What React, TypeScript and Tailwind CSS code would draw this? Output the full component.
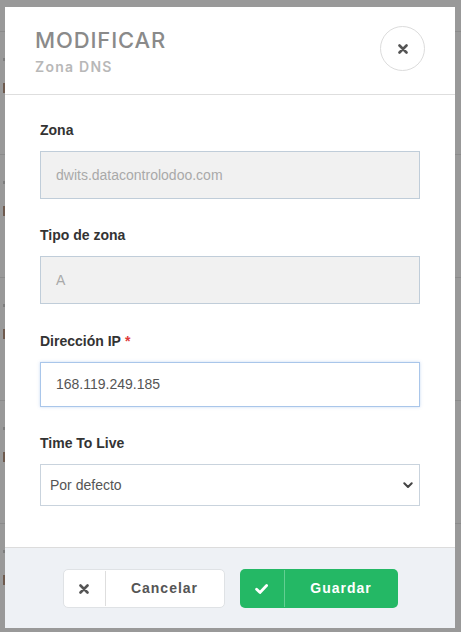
import React from 'react';

const backdropRows = [31, 154, 277, 400, 523];

function TimesIcon({ className = '' }: { className?: string }): React.ReactElement {
  return (
    <svg className={className} width="10" height="10" viewBox="0 0 10 10" fill="none">
      <path d="M1.5 1.5 L8.5 8.5 M8.5 1.5 L1.5 8.5" stroke="currentColor" strokeWidth="2.6" strokeLinecap="round" />
    </svg>
  );
}

function CheckIcon(): React.ReactElement {
  return (
    <svg width="13" height="10" viewBox="0 0 13 10" fill="none">
      <path d="M1.6 5.2 L5 8.4 L11.6 1.6" stroke="currentColor" strokeWidth="2.8" strokeLinecap="round" strokeLinejoin="round" />
    </svg>
  );
}

function Field({
  label,
  required = false,
  children,
  className = '',
}: {
  label: string;
  required?: boolean;
  children: React.ReactNode;
  className?: string;
}): React.ReactElement {
  return (
    <div className={className}>
      <div className="text-[14px] leading-[20px] font-bold text-[#333] mb-[11px]">
        {label}
        {required && <span className="text-[#e03a3a] ml-[4px]">*</span>}
      </div>
      {children}
    </div>
  );
}

export default function App(): React.ReactElement {
  return (
    <div className="relative w-[461px] h-[632px] overflow-hidden bg-[#999999] font-['Liberation_Sans',Arial,sans-serif]">
      {/* Page behind the backdrop */}
      {backdropRows.map((top) => (
        <div key={top} className="absolute left-0 right-0 border-t border-[#8b8b8b]" style={{ top }}>
          <div className="absolute left-[3px] top-[26px] w-[2px] h-[3px] bg-[#7d7d7d]" />
          <div className="absolute left-[3px] top-[51px] w-[2px] h-[10px] bg-[#6e5a4e]" />
        </div>
      ))}

      {/* Modal */}
      <div className="absolute left-[5px] top-[7px] w-[450px] h-[621px] bg-white flex flex-col">
        {/* Header */}
        <div className="h-[88px] border-b border-[#dedede] flex justify-between pl-[30px] pr-[30px]">
          <div className="pt-[19px] font-['Inter',sans-serif]">
            <div className="text-[22px] leading-[28px] font-medium tracking-[0.04em] text-[#8a8a8a]">MODIFICAR</div>
            <div className="mt-[4px] text-[14px] leading-[18px] font-semibold tracking-[0.09em] text-[#b8b8b8]">Zona DNS</div>
          </div>
          <button className="mt-[19px] w-[45px] h-[45px] rounded-full border border-[#dcdcdc] flex items-center justify-center text-[#555]">
            <TimesIcon />
          </button>
        </div>

        {/* Body */}
        <div className="flex-1 px-[35px] pt-[25px]">
          <Field label="Zona">
            <div className="h-[48px] border border-[#c0cdd9] bg-[#f1f1f1] pl-[15px] flex items-center text-[14px] text-[#a9a9a9]">
              dwits.datacontrolodoo.com
            </div>
          </Field>
          <Field label="Tipo de zona" className="mt-[26px]">
            <div className="h-[48px] border border-[#c0cdd9] bg-[#f1f1f1] pl-[15px] flex items-center text-[14px] text-[#a9a9a9]">
              A
            </div>
          </Field>
          <Field label="Dirección IP" required className="mt-[27px]">
            <div className="h-[45px] border border-[#a9c6ea] shadow-[0_0_3px_rgba(102,153,221,0.35)] bg-white pl-[15px] flex items-center text-[14px] text-[#555]">
              168.119.249.185
            </div>
          </Field>
          <Field label="Time To Live" className="mt-[26px]">
            <div className="h-[42px] border border-[#c9d3dd] bg-white pl-[9px] pr-[6px] flex items-center justify-between text-[14px] text-[#555]">
              <span>Por defecto</span>
              <svg width="10" height="7" viewBox="0 0 10 7" fill="none">
                <path d="M1.3 1.3 L5 5 L8.7 1.3" stroke="#444" strokeWidth="2" strokeLinecap="round" strokeLinejoin="round" />
              </svg>
            </div>
          </Field>
        </div>

        {/* Footer */}
        <div className="h-[81px] border-t border-[#dcdcdc] bg-[#eef1f5] flex justify-center items-start pt-[21px] gap-[15px]">
          <button className="w-[162px] h-[39px] rounded-[5px] border border-[#dfe2e5] bg-white flex items-stretch text-[#555]">
            <span className="w-[42px] flex items-center justify-center border-r border-[#dedede] my-[1px]">
              <TimesIcon />
            </span>
            <span className="flex-1 flex items-center justify-center text-[14px] font-bold tracking-[1px]">Cancelar</span>
          </button>
          <button className="w-[158px] h-[39px] rounded-[5px] bg-[#24b865] flex items-stretch text-white">
            <span className="w-[45px] flex items-center justify-center border-r border-[#62cf92] my-[1px]">
              <CheckIcon />
            </span>
            <span className="flex-1 flex items-center justify-center text-[14px] font-bold tracking-[1px]">Guardar</span>
          </button>
        </div>
      </div>
    </div>
  );
}
